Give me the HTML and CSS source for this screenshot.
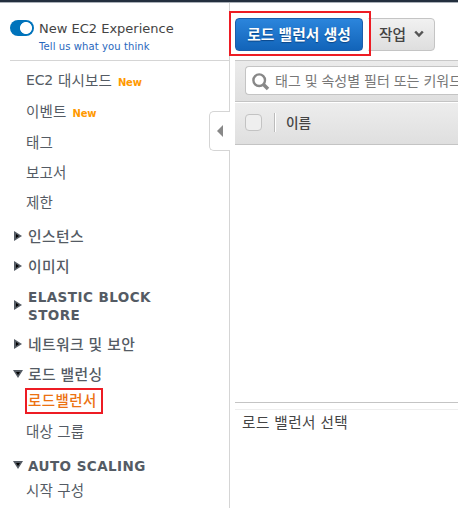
FILE: index.html
```html
<!DOCTYPE html>
<html lang="ko">
<head>
<meta charset="utf-8">
<title>EC2 로드 밸런서</title>
<link rel="stylesheet" href="styles.css">
</head>
<body>
<div class="topbar"></div>
<div class="layout">
  <aside class="sidebar">
    <div class="experience">
      <span class="toggle"></span>
      <div>
        <div class="experience-title">New EC2 Experience</div>
        <a class="feedback">Tell us what you think</a>
      </div>
    </div>
    <nav class="nav">
      <a class="item first"><span class="latin">EC2</span>대시보드<b class="new">New</b></a>
      <a class="item second">이벤트<b class="new">New</b></a>
      <a class="item">태그</a>
      <a class="item">보고서</a>
      <a class="item">제한</a>
      <div class="group spaced"><svg class="arrow" viewBox="0 0 10 10"><path d="M1 0 9 5 1 10z"/><path class="core" d="M3 3 6 5 3 7z"/></svg>인스턴스</div>
      <div class="group"><svg class="arrow" viewBox="0 0 10 10"><path d="M1 0 9 5 1 10z"/><path class="core" d="M3 3 6 5 3 7z"/></svg>이미지</div>
      <div class="group double"><svg class="arrow" viewBox="0 0 10 10"><path d="M1 0 9 5 1 10z"/><path class="core" d="M3 3 6 5 3 7z"/></svg><span class="caps">ELASTIC BLOCK<br>STORE</span></div>
      <div class="group"><svg class="arrow" viewBox="0 0 10 10"><path d="M1 0 9 5 1 10z"/><path class="core" d="M3 3 6 5 3 7z"/></svg>네트워크 및 보안</div>
      <div class="group"><svg class="arrow" viewBox="0 0 10 10"><path d="M0 1H10L5 9z"/><path class="core" d="M3 3H7L5 6z"/></svg>로드 밸런싱</div>
      <a class="item selected">로드밸런서</a>
      <a class="item">대상 그룹</a>
      <div class="group auto"><svg class="arrow" viewBox="0 0 10 10"><path d="M0 1H10L5 9z"/><path class="core" d="M3 3H7L5 6z"/></svg><span class="caps">AUTO SCALING</span></div>
      <a class="item last">시작 구성</a>
    </nav>
    <div class="collapse"><svg viewBox="0 0 6 12"><path d="M6 0V12L0 6z"/></svg></div>
  </aside>
  <main class="main">
    <div class="actions">
      <button class="create">로드 밸런서 생성</button>
      <button class="more">작업<svg viewBox="0 0 10 8"><path d="M1.2 1.5 5 5.5 8.8 1.5"/></svg></button>
      <span class="highlight"></span>
    </div>
    <div class="filter">
      <div class="search">
        <svg viewBox="0 0 18 18"><circle cx="7.2" cy="7.2" r="5.8"/><path d="M11.5 11.5 16 16"/></svg>
        <span>태그 및 속성별 필터 또는 키워드</span>
      </div>
    </div>
    <div class="table-head"><span class="checkbox"></span><span class="divider"></span><span class="name">이름</span></div>
    <div class="rows"></div>
    <div class="splitter"></div>
    <div class="detail">로드 밸런서 선택</div>
  </main>
</div>
</body>
</html>
```
FILE: styles.css
```css
* { box-sizing: border-box; }
body {
  margin: 0;
  width: 458px;
  height: 508px;
  overflow: hidden;
  background: #fff;
  color: #545b64;
  font: 14px "DejaVu Sans", "Noto Sans CJK KR", sans-serif;
}
.topbar { height: 3px; background: #232f3e; border-bottom: 1px solid #aab0b8; }
.layout { display: flex; height: 505px; }
.sidebar {
  position: relative;
  flex: none;
  width: 230px;
  border-right: 1px solid #d5d5d5;
}
.experience {
  display: flex;
  height: 58px;
  margin-left: 10px;
  padding-top: 17px;
  border-bottom: 1px solid #d5d5d5;
}
.toggle {
  width: 24px;
  height: 16px;
  margin-right: 5px;
  border-radius: 8px;
  background: radial-gradient(circle at 16px 8px, #fff 5.6px, #0073bb 6.4px);
}
.experience-title { color: #444; font-size: 13px; line-height: 17px; white-space: nowrap; }
.feedback { display: block; margin-top: 2px; color: #2867bd; font-size: 10px; line-height: 16px; letter-spacing: .1px; }
.nav { padding-top: 4px; font-family: "Noto Sans CJK KR", sans-serif; }
.item { display: flex; align-items: center; height: 30px; padding: 0 0 2px 26px; font-size: 14.5px; letter-spacing: .15px; white-space: nowrap; }
.first, .second { height: 31px; }
.latin { margin-right: 5px; font: 14px "DejaVu Sans", sans-serif; letter-spacing: -.2px; }
.new { margin: 5px 0 0 6px; color: #ff9900; font: bold 10px "DejaVu Sans", sans-serif; letter-spacing: -.2px; }
.group { display: flex; align-items: center; height: 30px; padding: 0 0 2px 13px; font-size: 14.8px; font-weight: 500; letter-spacing: .4px; white-space: nowrap; }
.spaced { margin-top: 4px; }
.double { height: 48px; }
.arrow { width: 10px; height: 10px; margin: 2px 5px 0 0; fill: #545b64; }
.arrow .core { fill: #000; }
.caps { margin-top: 3px; font: bold 13.5px/18px "DejaVu Sans", sans-serif; letter-spacing: .45px; }
.selected {
  width: 78px;
  height: 26px;
  margin: -1px 0 2px 25px;
  padding: 0 0 3px 1px;
  border: 2px solid #ed1c24;
  color: #ec7211;
  font-weight: 500;
  letter-spacing: .4px;
}
.auto { margin-top: 4px; }
.last { margin-top: -5px; }
.collapse {
  position: absolute;
  top: 108px;
  right: -1px;
  display: flex;
  align-items: center;
  width: 21px;
  height: 40px;
  padding-left: 7px;
  border: 1px solid #d5d5d5;
  border-right: 0;
  border-radius: 5px 0 0 5px;
  background: #fff;
}
.collapse svg { width: 6px; height: 12px; fill: #888; }
.main { display: flex; flex: 1; flex-direction: column; min-width: 0; padding-left: 5px; }
.actions { position: relative; display: flex; height: 57px; padding-top: 15px; }
button { height: 33px; padding: 0 0 3px; border-radius: 4px; font: 500 14.7px "Noto Sans CJK KR", sans-serif; white-space: nowrap; }
.create {
  position: relative;
  z-index: 1;
  width: 128px;
  border: 1px solid #1b5dab;
  background: linear-gradient(#2b85dc, #1264b9);
  box-shadow: 0 0 0 6px #fff;
  color: #fff;
  font-weight: 700;
  letter-spacing: .1px;
  text-shadow: 0 1px 1px #0b4687;
}
.more {
  display: flex;
  align-items: center;
  width: 75px;
  margin-left: -3px;
  padding-left: 18px;
  border: 1px solid #c4c4c4;
  background: linear-gradient(#f1f1f1, #dedede);
  color: #444;
}
.more svg { width: 10px; height: 8px; margin: 1px 0 0 8px; fill: none; stroke: #555; stroke-width: 2.5; }
.highlight { position: absolute; top: 8px; left: -6px; z-index: 2; width: 142px; height: 45px; border: 2px solid #ed1c24; }
.filter {
  height: 42px;
  padding: 5px 0 0 10px;
  border-top: 1px solid #c8c8c8;
  border-bottom: 1px solid #c4c4c4;
  background: linear-gradient(#ebebeb, #dfdfdf);
}
.search {
  display: flex;
  align-items: center;
  height: 29px;
  padding: 0 0 2px 6px;
  overflow: hidden;
  border: 1px solid #c4c4c4;
  border-right: 0;
  border-radius: 4px 0 0 4px;
  background: #fff;
  color: #777;
  font: 14px "Noto Sans CJK KR", sans-serif;
  white-space: nowrap;
}
.search svg { flex: none; width: 18px; height: 18px; margin: 5px 5px 0 0; fill: none; stroke: #888; stroke-width: 2.4; }
.search path { stroke-width: 3.6; }
.table-head {
  display: flex;
  align-items: center;
  height: 42px;
  margin-top: 1px;
  padding: 0 0 2px 10px;
  border-bottom: 1px solid #c4c4c4;
  background: linear-gradient(#ededed, #dfdfdf);
}
.checkbox { width: 17px; height: 17px; border: 1px solid #c3c3c3; border-radius: 4px; background: #efefef; }
.divider { width: 2px; height: 19px; margin: 0 10px 0 12px; border-left: 1px solid #bbb; background: #fff; }
.name { margin-top: -2px; color: #444; font: 500 13.7px "Noto Sans CJK KR", sans-serif; }
.rows { height: 258px; border-bottom: 1px solid #c4c4c4; }
.splitter { height: 7px; border-bottom: 1px solid #eee; }
.detail { padding-left: 7px; color: #444; font: 14.6px/24px "Noto Sans CJK KR", sans-serif; letter-spacing: .45px; }
```
